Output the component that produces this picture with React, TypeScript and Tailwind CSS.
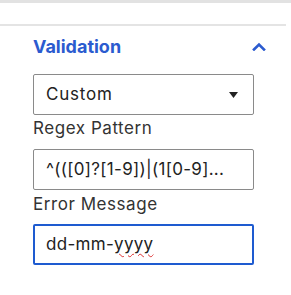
import React from "react";

export default function App() {
  return (
    <div
      className="w-[291px] h-[295px] bg-white overflow-hidden"
      style={{ fontFamily: "Inter, 'Noto Sans', sans-serif" }}
    >
      <div className="h-[3px] bg-[#e2e2e2]" />
      <div className="h-[21px]" />
      <div className="h-[2px] w-[286px] bg-[#e4e4e4]" />
      <div className="pl-[33px] pr-[25px]">
        <div className="flex items-center justify-between h-[40px] pt-[1px]">
          <span className="text-[18px] font-bold text-[#2b5bcf] leading-none">Validation</span>
          <svg width="14" height="9" viewBox="0 0 14 9" className="mr-[0px]">
            <path d="M2 7.5 L7 2.5 L12 7.5" fill="none" stroke="#2b5bcf" strokeWidth="2.6" strokeLinecap="square" />
          </svg>
        </div>
        <div className="w-[221px] pt-[8px]">
          <div className="h-[41px] border border-[#8a8a8a] rounded-[2px] flex items-center justify-between pl-[12px] pr-[15px]">
            <span className="text-[17px] text-[#222] tracking-[0.8px]">Custom</span>
            <svg width="9" height="6" viewBox="0 0 9 6">
              <path d="M0 0 H9 L4.5 6 Z" fill="#222" />
            </svg>
          </div>
          <div className="text-[17px] text-[#333] leading-[20px] mt-[3px] h-[31px] tracking-[0.55px]">Regex Pattern</div>
          <div className="h-[41px] border border-[#8a8a8a] rounded-[2px] flex items-center pl-[12px] pr-[10px] overflow-hidden">
            <span className="text-[17px] text-[#222] whitespace-nowrap tracking-[0.3px]">^(([0]?[1-9])|(1[0-9]...</span>
          </div>
          <div className="text-[17px] text-[#333] leading-[20px] mt-[4px] h-[30px] tracking-[0.55px]">Error Message</div>
          <div className="h-[41px] border-2 border-[#1e5bd0] rounded-[2px] flex items-center pl-[11px]">
            <span className="text-[17px] text-[#222] whitespace-nowrap tracking-[0.3px]">
              dd-mm-
              <span className="underline decoration-wavy decoration-[#d33] decoration-[1px] underline-offset-[3px]">yyyy</span>
            </span>
          </div>
        </div>
      </div>
    </div>
  );
}
